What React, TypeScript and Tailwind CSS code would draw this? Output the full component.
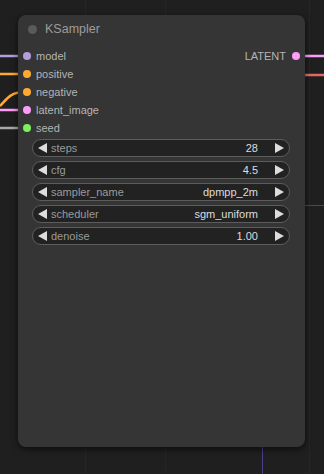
import { Fragment } from 'react'

const inputs = [
  { name: 'model', color: '#b39ddb' },
  { name: 'positive', color: '#ffa931' },
  { name: 'negative', color: '#ffa931' },
  { name: 'latent_image', color: '#ff9cf9' },
  { name: 'seed', color: '#7cf05c' },
]

const widgets = [
  { name: 'steps', value: '28' },
  { name: 'cfg', value: '4.5' },
  { name: 'sampler_name', value: 'dpmpp_2m' },
  { name: 'scheduler', value: 'sgm_uniform' },
  { name: 'denoise', value: '1.00' },
]

function Wires() {
  return (
    <svg className="absolute inset-0" width="324" height="474">
      {/* faint canvas lines */}
      <line x1="85.5" y1="0" x2="85.5" y2="474" stroke="#262626" />
      <line x1="165.5" y1="0" x2="165.5" y2="474" stroke="#252525" />
      <line x1="309.5" y1="0" x2="309.5" y2="474" stroke="#262626" />
      <line x1="262.5" y1="440" x2="262.5" y2="474" stroke="#4a3f8a" />
      <line x1="305" y1="205.5" x2="324" y2="205.5" stroke="#4a3f8a" />

      <path d="M0 56 L24 56" stroke="#b39ddb" strokeWidth="2.5" fill="none" />
      <path d="M0 74 L24 74" stroke="#ffa931" strokeWidth="2.5" fill="none" />
      <path d="M0 106 C 6 100, 10 92, 24 92" stroke="#ffa931" strokeWidth="2.5" fill="none" />
      <path d="M0 110 L24 110" stroke="#ff9cf9" strokeWidth="2.5" fill="none" />
      <path d="M0 128 L24 128" stroke="#a8a8a8" strokeWidth="2.5" fill="none" />

      <path d="M298 56 L324 56" stroke="#ff9cf9" strokeWidth="2.5" fill="none" />
      <path d="M303 75 L324 75" stroke="#e36a62" strokeWidth="2.5" fill="none" />
    </svg>
  )
}

function Arrow({ dir }: { dir: 'left' | 'right' }) {
  return (
    <svg width="9" height="10" viewBox="0 0 9 10" className="shrink-0">
      <path d={dir === 'left' ? 'M9 0 L9 10 L0 5 Z' : 'M0 0 L0 10 L9 5 Z'} fill="#dddddd" />
    </svg>
  )
}

function Widget({ name, value }: { name: string; value: string }) {
  return (
    <div className="flex h-[18px] items-center rounded-full border border-[#5c5c5c] bg-[#222222] pl-[5px] pr-[5px] text-[11px] leading-none">
      <Arrow dir="left" />
      <span className="ml-[4px] text-[#9a9a9a]">{name}</span>
      <span className="ml-auto text-[#dddddd]">{value}</span>
      <span className="ml-[17px]">
        <Arrow dir="right" />
      </span>
    </div>
  )
}

export default function App() {
  return (
    <div
      className="relative h-[474px] w-[324px] overflow-hidden bg-[#1f1f1f]"
      style={{ fontFamily: '"Liberation Sans", Arial, sans-serif' }}
    >
      <Wires />

      {/* KSampler node */}
      <div className="absolute left-[18px] top-[15px] flex h-[432px] w-[287px] flex-col rounded-[8px] bg-[#353535] shadow-[0_2px_6px_rgba(0,0,0,0.6)]">
        <div className="flex h-[28px] items-center gap-[8px] pl-[10px]">
          <span className="h-[9px] w-[9px] rounded-full bg-[#5a5a5a]" />
          <span className="text-[12.5px] text-[#9c9c9c]">KSampler</span>
        </div>

        <div className="relative pt-[4px]">
          {inputs.map((s) => (
            <div key={s.name} className="flex h-[18px] items-center pl-[5px]">
              <span className="h-[8px] w-[8px] rounded-full" style={{ background: s.color }} />
              <span className="ml-[5px] text-[11px] text-[#b4b4b4]">{s.name}</span>
            </div>
          ))}
          <div className="absolute right-[5px] top-[4px] flex h-[18px] items-center">
            <span className="text-[11px] text-[#b4b4b4]">LATENT</span>
            <span className="ml-[6px] h-[8px] w-[8px] rounded-full bg-[#ff9cf9]" />
          </div>
        </div>

        <div className="ml-[14px] mr-[15px] mt-[2px] flex flex-col gap-[4px]">
          {widgets.map((w) => (
            <Fragment key={w.name}>
              <Widget name={w.name} value={w.value} />
            </Fragment>
          ))}
        </div>
      </div>
    </div>
  )
}
